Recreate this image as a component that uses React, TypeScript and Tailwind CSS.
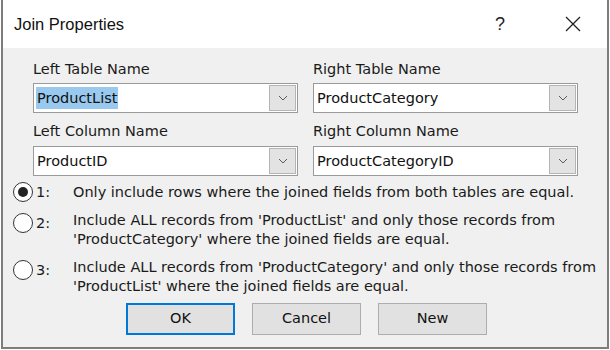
import React from "react";

const font = { fontFamily: '"DejaVu Sans", Verdana, sans-serif' };
const titleFont = { fontFamily: '"Liberation Sans", Arial, sans-serif' };

function Chevron() {
  return (
    <svg width="10" height="6" viewBox="0 0 10 6" fill="none">
      <path d="M1 1 L5 5 L9 1" stroke="#5a5a5a" strokeWidth="1" />
    </svg>
  );
}

function Combo({ value, selected }: { value: string; selected?: boolean }) {
  return (
    <div className="flex h-[30px] w-[265px] items-center border border-[#9a9a9a] bg-white pl-[2px] pr-[1px]">
      <div className="flex min-w-0 flex-1 items-center">
        {selected ? (
          <span className="bg-[#99c9ef] px-[1px] py-[1px] leading-[20px] text-[#111]">{value}</span>
        ) : (
          <span className="px-[1px] leading-[20px] text-[#111]">{value}</span>
        )}
      </div>
      <div className="flex h-[26px] w-[27px] items-center justify-center border border-[#b5b5b5] bg-[#e3e3e3]">
        <Chevron />
      </div>
    </div>
  );
}

function Radio({ checked }: { checked?: boolean }) {
  return (
    <div className="flex h-[20px] w-[20px] shrink-0 items-center justify-center rounded-full border-[1.5px] border-[#333] bg-white">
      {checked ? <div className="h-[10px] w-[10px] rounded-full bg-[#222]" /> : null}
    </div>
  );
}

function Btn({ label, primary }: { label: string; primary?: boolean }) {
  return (
    <div
      className={
        "flex h-[32px] w-[109px] items-center justify-center bg-[#e1e1e1] text-[#111] " +
        (primary ? "border-2 border-[#0078d7]" : "border border-[#adadad]")
      }
    >
      {label}
    </div>
  );
}

export default function App() {
  return (
    <div className="h-[350px] w-[610px] bg-white pl-[1px]" style={font}>
      <div className="flex h-[349px] w-[608px] flex-col border-x-2 border-b-2 border-[#7d7d7d]">
        <div className="flex h-[48px] items-center justify-between bg-white pl-[11px] pr-[26px]" style={titleFont}>
          <span className="text-[16.5px] text-[#111]">Join Properties</span>
          <div className="flex items-center gap-[60px]">
            <span className="text-[18px] text-[#222]">?</span>
            <svg width="16" height="16" viewBox="0 0 16 16">
              <path d="M1 1 L15 15 M15 1 L1 15" stroke="#222" strokeWidth="1.3" />
            </svg>
          </div>
        </div>
        <div className="flex flex-1 flex-col bg-[#f0f0f0] text-[14.5px] text-[#1a1a1a]">
          <div className="grid grid-cols-[265px_265px] gap-x-[15px] pl-[30px] pt-[11px]">
            <div className="flex flex-col">
              <span className="h-[20px] leading-[20px]">Left Table Name</span>
              <div className="mt-[4px]">
                <Combo value="ProductList" selected />
              </div>
              <span className="mt-[8px] h-[20px] leading-[20px]">Left Column Name</span>
              <div className="mt-[5px]">
                <Combo value="ProductID" />
              </div>
            </div>
            <div className="flex flex-col">
              <span className="h-[20px] leading-[20px]">Right Table Name</span>
              <div className="mt-[4px]">
                <Combo value="ProductCategory" />
              </div>
              <span className="mt-[8px] h-[20px] leading-[20px]">Right Column Name</span>
              <div className="mt-[5px]">
                <Combo value="ProductCategoryID" />
              </div>
            </div>
          </div>
          <div className="mt-[6px] flex flex-col gap-[5px] pl-[10px]">
            <div className="flex items-start">
              <Radio checked />
              <span className="ml-[3px] w-[37px] leading-[20px]">1:</span>
              <span className="leading-[20px]">Only include rows where the joined fields from both tables are equal.</span>
            </div>
            <div className="flex items-start pt-[4px]">
              <div className="mt-[2px]"><Radio /></div>
              <span className="ml-[3px] mt-[2px] w-[37px] leading-[20px]">2:</span>
              <span className="leading-[19px]">
                Include ALL records from 'ProductList' and only those records from
                <br />
                'ProductCategory' where the joined fields are equal.
              </span>
            </div>
            <div className="flex items-start pt-[4px]">
              <div className="mt-[2px]"><Radio /></div>
              <span className="ml-[3px] mt-[2px] w-[37px] leading-[20px]">3:</span>
              <span className="whitespace-nowrap leading-[19px]">
                Include ALL records from 'ProductCategory' and only those records from
                <br />
                'ProductList' where the joined fields are equal.
              </span>
            </div>
          </div>
          <div className="mt-[7px] flex gap-[17px] pl-[123px]">
            <Btn label="OK" primary />
            <Btn label="Cancel" />
            <Btn label="New" />
          </div>
        </div>
      </div>
    </div>
  );
}
